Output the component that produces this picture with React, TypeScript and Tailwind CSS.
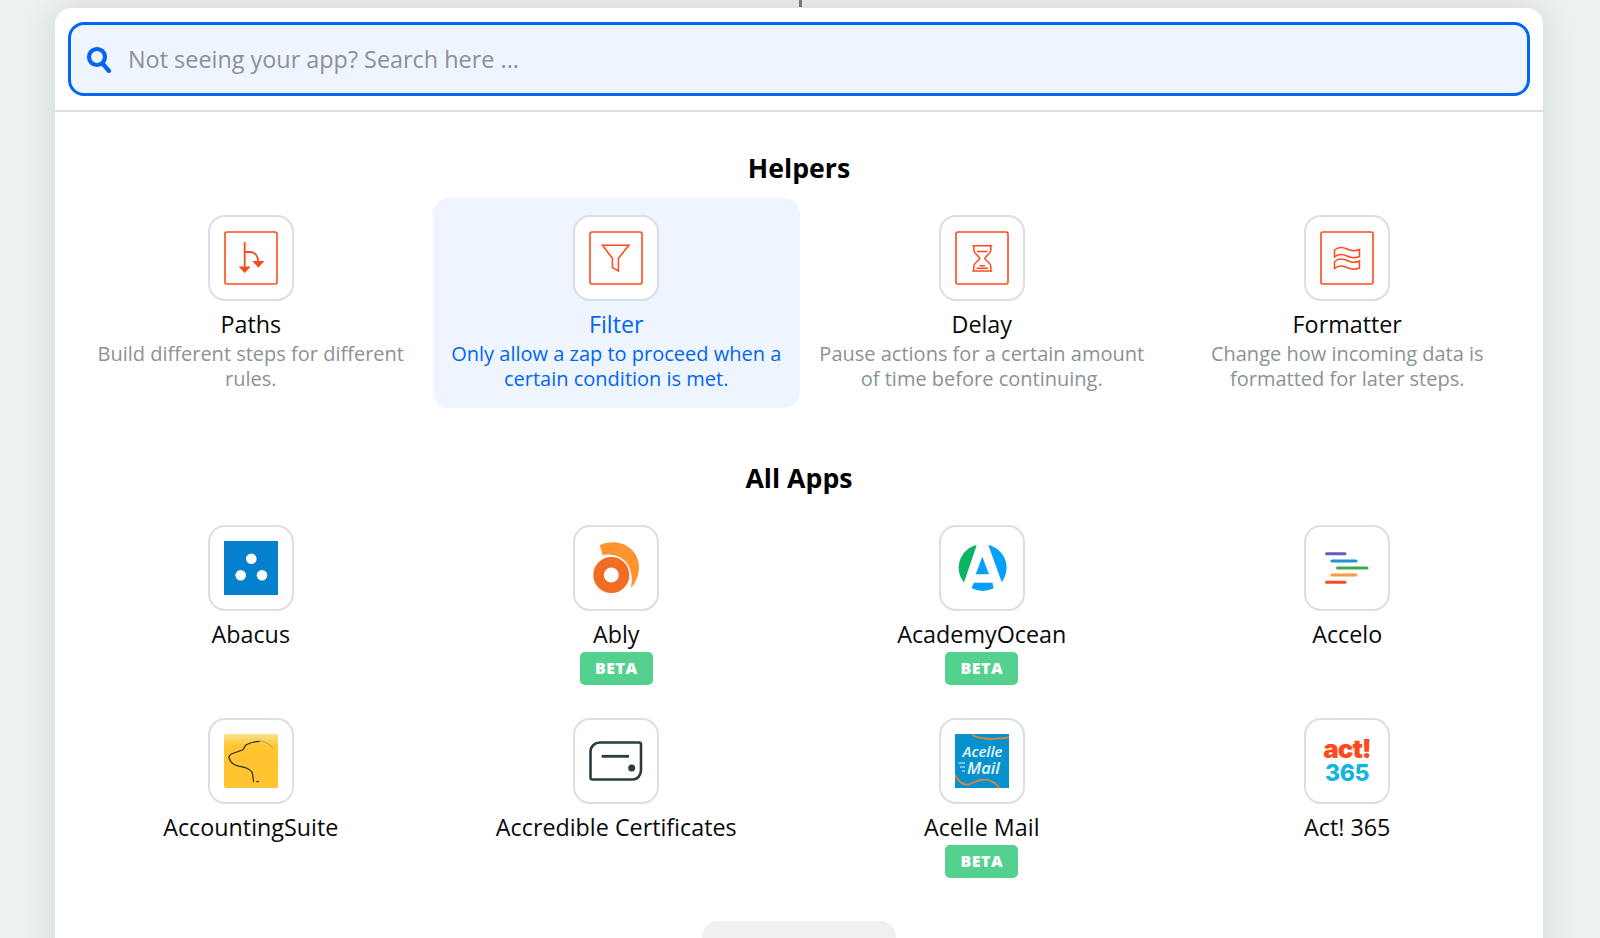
import React from "react";

const RED = "#ff4a1c";

function Frame({ children }: { children: React.ReactNode }) {
  return (
    <svg width="54" height="54" viewBox="0 0 54 54" fill="none">
      <rect x="1" y="1" width="52" height="52" rx="2" stroke={RED} strokeWidth="1.6" />
      <g stroke={RED} strokeWidth="1.5">{children}</g>
    </svg>
  );
}

const PathsIcon = () => (
  <Frame>
    <path d="M20.7 11V37" strokeWidth="1.8" />
    <path d="M20.7 21H26C31 21 34.3 25 34.3 31" strokeWidth="1.8" />
    <path d="M16.3 36.3H25L20.7 40.8Z" fill={RED} />
    <path d="M30 30.7H38.7L34.3 35.7Z" fill={RED} />
  </Frame>
);
const FilterIcon = () => (
  <Frame>
    <path d="M13.5 14.3H40L29.4 27.3V40L23.4 36.6V27.3Z" />
  </Frame>
);
const DelayIcon = () => (
  <Frame>
    <path d="M17.3 14.7H37.3M17.3 40H37.3" />
    <path d="M18.8 15V19C18.8 23 24.8 25.3 24.8 27.3C24.8 29.3 18.8 31.5 18.8 35.5V40M35.8 15V19C35.8 23 29.8 25.3 29.8 27.3C29.8 29.3 35.8 31.5 35.8 35.5V40" />
    <path d="M22 20.5H32.6M24.5 34.7H30M21.5 37.2H33" />
  </Frame>
);
const FormatterIcon = () => (
  <Frame>
    <path d="M14.5 19C18 16 23 16 27 18C31 20 36 20 39.5 18.5V25.5C36 27 31 27 27 25C23 23 18 23 14.5 26Z" />
    <path d="M14.5 30.5C18 27.5 23 27.5 27 29.5C31 31.5 36 31.5 39.5 30V37C36 38.5 31 38.5 27 36.5C23 34.5 18 34.5 14.5 37.5Z" />
  </Frame>
);

const Abacus = () => (
  <svg width="54" height="54" viewBox="0 0 54 54">
    <rect width="54" height="54" fill="#0480cc" />
    <circle cx="27.3" cy="17.7" r="5.3" fill="#fff" />
    <circle cx="16.7" cy="34.3" r="5.3" fill="#fff" />
    <circle cx="38" cy="34.3" r="5.3" fill="#fff" />
  </svg>
);
const Ably = () => (
  <svg width="54" height="54" viewBox="0 0 54 54">
    <path d="M10.7 4Q17 1 25 1.3C40 2 50 13 50 26C50 34 47 42 41.7 47C44.5 38 42 26 36 20C30 14 20 12.5 13.5 14Z" fill="#ff9430" />
    <circle cx="22.3" cy="34" r="12.75" fill="none" stroke="#f26c23" strokeWidth="10.5" />
  </svg>
);
const Ocean = () => (
  <svg width="54" height="54" viewBox="0 0 54 54">
    <path d="M21.7 4A23.3 23.3 0 0 0 9 41.5Z" fill="#0ab463" />
    <path d="M33.3 4A23.3 23.3 0 0 1 46.7 41Z" fill="#059ffc" />
    <path d="M27.3 15.7L34 33.3H20.7Z" fill="#059ffc" />
    <path d="M19 41.8H37.5L38.6 47.2A23.3 23.3 0 0 1 16.5 47Z" fill="#059ffc" />
  </svg>
);
const Accelo = () => (
  <svg width="54" height="54" viewBox="0 0 54 54" strokeWidth="3" strokeLinecap="round">
    <path d="M6.5 12.7H25" stroke="#6a58c0" />
    <path d="M12 20H36" stroke="#1a95cf" />
    <path d="M17.5 27H47" stroke="#3fa84a" />
    <path d="M12 34H36" stroke="#ff9a3c" />
    <path d="M6.5 41.3H25" stroke={RED} />
  </svg>
);
const Accounting = () => (
  <svg width="54" height="54" viewBox="0 0 54 54">
    <defs>
      <linearGradient id="yg" x1="0" y1="0" x2="0" y2="1">
        <stop offset="0" stopColor="#ffe28c" />
        <stop offset="0.22" stopColor="#ffc52f" />
        <stop offset="1" stopColor="#ffc431" />
      </linearGradient>
    </defs>
    <rect width="54" height="54" rx="2" fill="url(#yg)" />
    <path d="M35.7 7.3C30 7.5 26 9 22.3 10.7C20.5 12 20 15 19 15.7L7.3 20C5.5 21 4.8 23 5 24C6 27 8 29.5 10.7 30.7C14 32.5 19 32.5 22.3 34C25.5 35.5 27.8 37 28.3 39C29 42 29 45 29.7 48" fill="none" stroke="#2a2a20" strokeWidth="1.2" />
    <path d="M35.7 7.3C41 7.3 45 9.5 49 14" fill="none" stroke="#8a8472" strokeWidth="0.7" />
    <path d="M32 47.6H35" stroke="#2a2a20" strokeWidth="1" />
  </svg>
);
const Accredible = () => (
  <svg width="54" height="54" viewBox="0 0 54 54" fill="none">
    <path d="M11 8.5H50Q52 8.5 52 10.5V36C52 42 48 45.5 44 45.5H3.5Q1.5 45.5 1.5 43.5V18C1.5 12 6 8.5 11 8.5Z" stroke="#2b3d40" strokeWidth="2.6" />
    <path d="M12.7 22.3H40" stroke="#2b3d40" strokeWidth="2.8" />
    <circle cx="42.7" cy="34" r="3.5" fill="#2b3d40" />
  </svg>
);
const Acelle = () => (
  <svg width="54" height="54" viewBox="0 0 54 54" fill="none">
    <rect width="54" height="54" fill="#0792ce" />
    <path d="M17.3 0.6C22 5 40 6 54 3.3" stroke="#e8862e" strokeWidth="1.8" />
    <path d="M0 40.7C3 48 9 52 15 50C21 47.5 27 44 33 46C38 47.5 42 50 44 54" stroke="#e8862e" strokeWidth="1.8" />
    <text x="7.5" y="22.5" fontFamily="'Open Sans', sans-serif" fontStyle="italic" fontWeight="600" fontSize="15" fill="#e6f4fb">Acelle</text>
    <text x="12" y="40" fontFamily="'Open Sans', sans-serif" fontStyle="italic" fontWeight="600" fontSize="16.5" fill="#e6f4fb">Mail</text>
    <path d="M3.5 29H10M5 33H10M7 37H10" stroke="#e6f4fb" strokeWidth="1" />
  </svg>
);
const Act = () => (
  <svg width="54" height="54" viewBox="0 0 54 54">
    <text x="27" y="24" textAnchor="middle" fontFamily="Inter, sans-serif" fontWeight="900" fontSize="26" letterSpacing="-1" fill={RED}>act!</text>
    <text x="27" y="46.5" textAnchor="middle" fontFamily="Inter, sans-serif" fontWeight="800" fontSize="23" letterSpacing="-0.5" fill="#14b5dc">365</text>
  </svg>
);

function IconBox({ children }: { children: React.ReactNode }) {
  return (
    <div className="flex h-[86px] w-[86px] items-center justify-center rounded-[17px] border-2 border-[#d9dfe5] bg-white">
      {children}
    </div>
  );
}

function Beta() {
  return (
    <div className="mt-[1px] flex h-[33px] w-[73px] items-center justify-center rounded-[5px] bg-[#54d18f] pb-[1px] text-[16px] font-black tracking-[0.5px] text-white">
      BETA
    </div>
  );
}

function Item({
  icon,
  name,
  desc,
  beta,
  active,
}: {
  icon: React.ReactNode;
  name: string;
  desc?: string;
  beta?: boolean;
  active?: boolean;
}) {
  return (
    <div className={`flex flex-col items-center rounded-[16px] pt-[17px] text-center ${desc ? "pb-[17px]" : "pb-[16px]"} ${active ? "-mx-[1px] bg-[#eff5fe] px-[17px]" : "px-4"}`}>
      <IconBox>{icon}</IconBox>
      <div className={`mt-[6px] text-[23.3px] leading-[34px] ${active ? "text-[#0266f0]" : "text-[#0a0a0a]"}`}>{name}</div>
      {desc && (
        <div className={`mt-[1px] text-[20px] leading-[24.5px] ${active ? "text-[#0266f0]" : "text-[#8a9294]"}`}>{desc}</div>
      )}
      {beta && <Beta />}
    </div>
  );
}

export default function App() {
  return (
    <div className="flex h-[938px] w-full flex-col items-center overflow-hidden bg-[#eef1f1] font-['Open_Sans',sans-serif]">
      <div className="h-[7px] w-[3px] shrink-0 bg-[#7d7f80]" />
      <div className="mt-[1px] mr-[2px] w-[1488px] shrink-0 rounded-t-[16px] bg-white shadow-[0_0_32px_rgba(0,0,0,0.12)]">
        <div className="border-b-2 border-[#dcdfe0] px-[13px] pt-[14px] pb-[14px]">
          <div className="flex h-[74px] items-center rounded-[16px] border-[3px] border-[#0266f0] bg-[#eff5fe] pl-[14px]">
            <svg width="27" height="27" viewBox="0 0 27 27" fill="none" stroke="#0266f0" strokeWidth="4.2">
              <circle cx="12" cy="11" r="8" />
              <path d="M17.5 17.5L24 25" strokeLinecap="round" />
            </svg>
            <span className="ml-[16px] pt-[2px] text-[23.4px] text-[#8a9294]">Not seeing your app? Search here ...</span>
          </div>
        </div>
        <div className="px-[13px]">
          <h2 className="mt-[38px] mb-[12px] text-center text-[26.7px] leading-[36px] font-bold text-black">Helpers</h2>
          <div className="grid grid-cols-4">
            <Item icon={<PathsIcon />} name="Paths" desc="Build different steps for different rules." />
            <Item active icon={<FilterIcon />} name="Filter" desc="Only allow a zap to proceed when a certain condition is met." />
            <Item icon={<DelayIcon />} name="Delay" desc="Pause actions for a certain amount of time before continuing." />
            <Item icon={<FormatterIcon />} name="Formatter" desc="Change how incoming data is formatted for later steps." />
          </div>
          <h2 className="mt-[52px] mb-[12px] text-center text-[26.7px] leading-[36px] font-bold text-black">All Apps</h2>
          <div className="grid grid-cols-4">
            <Item icon={<Abacus />} name="Abacus" />
            <Item icon={<Ably />} name="Ably" beta />
            <Item icon={<Ocean />} name="AcademyOcean" beta />
            <Item icon={<Accelo />} name="Accelo" />
            <Item icon={<Accounting />} name="AccountingSuite" />
            <Item icon={<Accredible />} name="Accredible Certificates" />
            <Item icon={<Acelle />} name="Acelle Mail" beta />
            <Item icon={<Act />} name="Act! 365" />
          </div>
          <div className="mt-[27px] flex justify-center">
            <div className="h-[60px] w-[194px] rounded-[16px] bg-[#f0f0f0]" />
          </div>
        </div>
      </div>
    </div>
  );
}
